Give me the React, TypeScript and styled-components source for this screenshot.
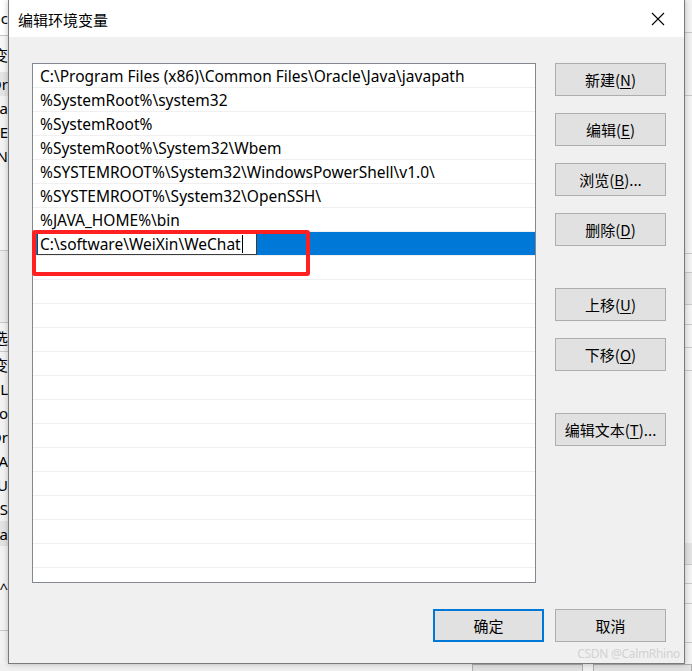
import React from "react";
import styled, { createGlobalStyle } from "styled-components";

const Global = createGlobalStyle`
  html, body { margin: 0; padding: 0; }
  body { width: 692px; height: 671px; overflow: hidden; background: #f0f0f0; }
`;

const UI = `"Noto Sans", "Noto Sans CJK SC", sans-serif`;

const Screen = styled.div`
  width: 692px;
  height: 671px;
  display: flex;
  flex-direction: column;
  overflow: hidden;
  background: #f0f0f0;
  font-family: ${UI};
`;

const Stage = styled.div`
  display: flex;
  height: 664px;
`;

const SideBg = styled.div<{ $w: number }>`
  width: ${(p) => p.$w}px;
  flex: none;
  display: flex;
  flex-direction: column;
  overflow: hidden;
  background: #f3f3f3;
`;

const Strip = styled.div<{ $h: number; $bg?: string; $line?: boolean }>`
  height: ${(p) => p.$h}px;
  flex: none;
  background: ${(p) => p.$bg || "transparent"};
  border-bottom: ${(p) => (p.$line ? "1px solid #c8c8c8" : "none")};
  display: flex;
  align-items: center;
  justify-content: flex-end;
  font-size: 15px;
  color: #000;
  white-space: nowrap;
  overflow: hidden;
`;

const Dialog = styled.div`
  width: 677px;
  flex: none;
  box-sizing: border-box;
  border: 1px solid #7a7a7a;
  border-top: none;
  background: #f0f0f0;
  display: flex;
  flex-direction: column;
  box-shadow: 0 0 6px rgba(0, 0, 0, 0.25);
  position: relative;
  z-index: 1;
`;

const TitleBar = styled.div`
  height: 37px;
  flex: none;
  background: #ffffff;
  display: flex;
  align-items: center;
  justify-content: space-between;
  padding-left: 9px;
`;

const Title = styled.span`
  font-family: "Noto Sans CJK SC", sans-serif;
  font-size: 15px;
  color: #000;
  margin-top: 1px;
`;

const CloseBox = styled.div`
  width: 46px;
  height: 37px;
  display: flex;
  align-items: center;
  justify-content: center;
  margin-right: 3px;
`;

const Body = styled.div`
  flex: 1;
  display: flex;
  flex-direction: column;
  padding: 26px 0 0 23px;
`;

const Main = styled.div`
  display: flex;
  gap: 19px;
`;

const ListWrap = styled.div`
  position: relative;
  width: 504px;
  height: 520px;
  flex: none;
`;

const ListBox = styled.div`
  box-sizing: border-box;
  width: 100%;
  height: 100%;
  border: 1px solid #828790;
  background: #ffffff;
  overflow: hidden;
  display: flex;
  flex-direction: column;
`;

const Row = styled.div<{ $selected?: boolean }>`
  height: 24px;
  flex: none;
  box-sizing: border-box;
  border-bottom: 1px solid #f0f0f0;
  display: flex;
  align-items: center;
  padding-left: ${(p) => (p.$selected ? 4 : 7)}px;
  background: ${(p) => (p.$selected ? "#0078d7" : "#ffffff")};
  font-size: 15.5px;
  color: #000;
  white-space: nowrap;
`;

const EditBox = styled.div`
  box-sizing: border-box;
  width: 220px;
  height: 23px;
  background: #ffffff;
  border: 1px solid #3c3c3c;
  display: flex;
  align-items: center;
  padding-left: 2px;
  font-size: 15.5px;
  color: #000;
  white-space: nowrap;
`;

const Caret = styled.span`
  display: inline-block;
  width: 1px;
  height: 18px;
  background: #000;
  margin-left: 1px;
`;

const Annotation = styled.div`
  position: absolute;
  left: 0;
  top: 167px;
  width: 278px;
  height: 46px;
  box-sizing: border-box;
  border: 4px solid #ff2121;
  border-radius: 3px;
  pointer-events: none;
`;

const SideButtons = styled.div`
  display: flex;
  flex-direction: column;
`;

const Button = styled.button<{ $gap?: number; $default?: boolean }>`
  box-sizing: border-box;
  width: 111px;
  height: 33px;
  margin-top: ${(p) => p.$gap ?? 0}px;
  background: #e1e1e1;
  border: ${(p) => (p.$default ? "2px solid #0078d7" : "1px solid #adadad")};
  border-radius: 0;
  padding: 0;
  font-family: "Noto Sans CJK SC", sans-serif;
  font-size: 15px;
  color: #000;
  display: flex;
  align-items: center;
  justify-content: center;
  cursor: default;
`;

const Key = styled.span`
  text-decoration: underline;
  text-underline-offset: 2px;
  text-decoration-thickness: 1px;
`;

const Footer = styled.div`
  display: flex;
  justify-content: flex-end;
  gap: 11px;
  padding: 26px 18px 0 0;
`;

const Watermark = styled.div`
  position: absolute;
  right: 4px;
  bottom: 1px;
  font-family: "Noto Sans", sans-serif;
  font-size: 12px;
  color: #d2d2d2;
  letter-spacing: -0.3px;
`;

const BottomStrip = styled.div`
  height: 7px;
  display: flex;
  background: #f0f0f0;
`;

const Tab = styled.div<{ $w: number; $ml: number }>`
  width: ${(p) => p.$w}px;
  margin-left: ${(p) => p.$ml}px;
  border: 1px solid #adadad;
  border-bottom: none;
  background: #e1e1e1;
  box-sizing: border-box;
`;

const paths = [
  "C:\\Program Files (x86)\\Common Files\\Oracle\\Java\\javapath",
  "%SystemRoot%\\system32",
  "%SystemRoot%",
  "%SystemRoot%\\System32\\Wbem",
  "%SYSTEMROOT%\\System32\\WindowsPowerShell\\v1.0\\",
  "%SYSTEMROOT%\\System32\\OpenSSH\\",
  "%JAVA_HOME%\\bin",
];

const leftStrips: { h: number; t?: string; bg?: string; line?: boolean }[] = [
  { h: 35, t: "Func", bg: "#ffffff", line: true },
  { h: 36, t: "变", bg: "#f7f7f7" },
  { h: 24, t: "Or", bg: "#e5e5e5" },
  { h: 24, t: "Da" },
  { h: 24, t: "E" },
  { h: 24, t: "N" },
  { h: 82, bg: "#f5f5f5", line: true },
  { h: 71, bg: "#ececec", line: true },
  { h: 28, t: "选", bg: "#f3f3f3", line: true },
  { h: 25, t: "变" },
  { h: 24, t: "L" },
  { h: 24, t: "o" },
  { h: 24, t: "Or" },
  { h: 24, t: "A" },
  { h: 24, t: "IU" },
  { h: 24, t: "oS" },
  { h: 25, t: "a", bg: "#e3e3e3" },
  { h: 84, t: "^", line: true },
  { h: 30 },
];

const rightStrips: { h: number; bg?: string; line?: boolean }[] = [
  { h: 32, line: true },
  { h: 62, bg: "#f0f0f0", line: true },
  { h: 157, line: true },
  { h: 18, line: true },
  { h: 31, bg: "#e8e8e8", line: true },
  { h: 19, line: true },
  { h: 22, line: true },
  { h: 22, line: true },
  { h: 172, bg: "#f2f2f2" },
  { h: 21, bg: "#e2e2e2", line: true },
  { h: 18, line: true },
  { h: 19, line: true },
  { h: 38, line: true },
];

function Close() {
  return (
    <svg width="14" height="14" viewBox="0 0 14 14">
      <path d="M1 1 L13 13 M13 1 L1 13" stroke="#000" strokeWidth="1.1" fill="none" />
    </svg>
  );
}

function Label({ text, k, tail }: { text: string; k?: string; tail?: string }) {
  return (
    <span>
      {text}
      {k ? (
        <>
          (<Key>{k}</Key>){tail}
        </>
      ) : null}
    </span>
  );
}

export default function App() {
  const emptyRows = Array.from({ length: 14 });
  return (
    <Screen>
      <Global />
      <Stage>
        <SideBg $w={8}>
          {leftStrips.map((s, i) => (
            <Strip key={i} $h={s.h} $bg={s.bg} $line={s.line}>
              {s.t}
            </Strip>
          ))}
        </SideBg>
        <Dialog>
          <TitleBar>
            <Title>编辑环境变量</Title>
            <CloseBox>
              <Close />
            </CloseBox>
          </TitleBar>
          <Body>
            <Main>
              <ListWrap>
                <ListBox>
                  {paths.map((p) => (
                    <Row key={p}>{p}</Row>
                  ))}
                  <Row $selected>
                    <EditBox>
                      C:\software\WeiXin\WeChat
                      <Caret />
                    </EditBox>
                  </Row>
                  {emptyRows.map((_, i) => (
                    <Row key={i} />
                  ))}
                </ListBox>
                <Annotation />
              </ListWrap>
              <SideButtons>
                <Button>
                  <Label text="新建" k="N" />
                </Button>
                <Button $gap={17}>
                  <Label text="编辑" k="E" />
                </Button>
                <Button $gap={17}>
                  <Label text="浏览" k="B" tail="..." />
                </Button>
                <Button $gap={17}>
                  <Label text="删除" k="D" />
                </Button>
                <Button $gap={42}>
                  <Label text="上移" k="U" />
                </Button>
                <Button $gap={17}>
                  <Label text="下移" k="O" />
                </Button>
                <Button $gap={42}>
                  <Label text="编辑文本" k="T" tail="..." />
                </Button>
              </SideButtons>
            </Main>
            <Footer>
              <Button $default>确定</Button>
              <Button>取消</Button>
            </Footer>
          </Body>
          <Watermark>CSDN @CalmRhino</Watermark>
        </Dialog>
        <SideBg $w={7}>
          {rightStrips.map((s, i) => (
            <Strip key={i} $h={s.h} $bg={s.bg} $line={s.line} />
          ))}
        </SideBg>
      </Stage>
      <BottomStrip>
        <Tab $w={111} $ml={472} />
        <Tab $w={99} $ml={10} />
      </BottomStrip>
    </Screen>
  );
}
